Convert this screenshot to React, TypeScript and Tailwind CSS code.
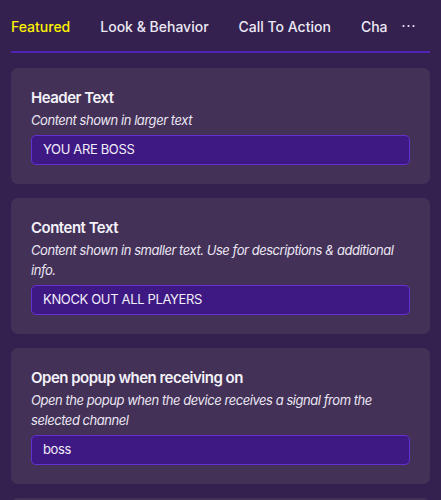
import React from 'react';

const tabs = ['Featured', 'Look & Behavior', 'Call To Action', 'Channels'];

const fields = [
  { title: 'Header Text', desc: 'Content shown in larger text', value: 'YOU ARE BOSS' },
  {
    title: 'Content Text',
    desc: 'Content shown in smaller text. Use for descriptions & additional info.',
    value: 'KNOCK OUT ALL PLAYERS',
  },
  {
    title: 'Open popup when receiving on',
    desc: 'Open the popup when the device receives a signal from the selected channel',
    value: 'boss',
  },
];

const App: React.FC = () => {
  return (
    <div
      className="w-[441px] h-[500px] overflow-hidden bg-[#34214f] text-white"
      style={{ fontFamily: 'Inter, "Noto Sans", sans-serif' }}
    >
      {/* Tab bar */}
      <div className="mx-[11px] h-[53px] flex items-stretch border-b-2 border-[#4f24b6]">
        <div className="w-[377px] shrink-0 overflow-hidden flex gap-[30px]">
          {tabs.map((tab, i) => (
            <div
              key={tab}
              className={`shrink-0 flex items-center pt-[2px] text-[14px] font-medium -mb-[2px] border-b-2 ${
                i === 0 ? 'text-[#fff200] border-[#fff200]' : 'text-[#ece8f4] border-transparent'
              }`}
            >
              {tab}
            </div>
          ))}
        </div>
        <div className="flex-1 flex items-center pl-[14px] pt-[1px]">
          {/* more tabs */}
          <svg width="13" height="4" viewBox="0 0 13 4" fill="#ece8f4">
            <circle cx="1.5" cy="2" r="1.1" />
            <circle cx="6.5" cy="2" r="1.1" />
            <circle cx="11.5" cy="2" r="1.1" />
          </svg>
        </div>
      </div>

      {/* Cards */}
      <div className="mx-[11px] mt-[15px] flex flex-col gap-[14px]">
        {fields.map(f => (
          <div key={f.title} className="bg-[#433158] rounded-[7px] px-[20px] pt-[20px] pb-[19px]">
            <h3 className="text-[15px] font-semibold leading-5 mb-[2px] tracking-[-0.5px] text-[#f4f1f8]">
              {f.title}
            </h3>
            <p className="text-[13px] italic leading-5 tracking-[-0.45px] text-[#ebe6f2]">{f.desc}</p>
            <div className="mt-[5px] h-[30px] rounded-[5px] bg-[#3e1983] border border-[#6331d2] flex items-center px-[11px] text-[13px] tracking-[-0.35px] text-[#f2eefa]">
              {f.value}
            </div>
          </div>
        ))}
        <div className="bg-[#433158] rounded-[7px] h-[60px]" />
      </div>
    </div>
  );
};

export default App;
